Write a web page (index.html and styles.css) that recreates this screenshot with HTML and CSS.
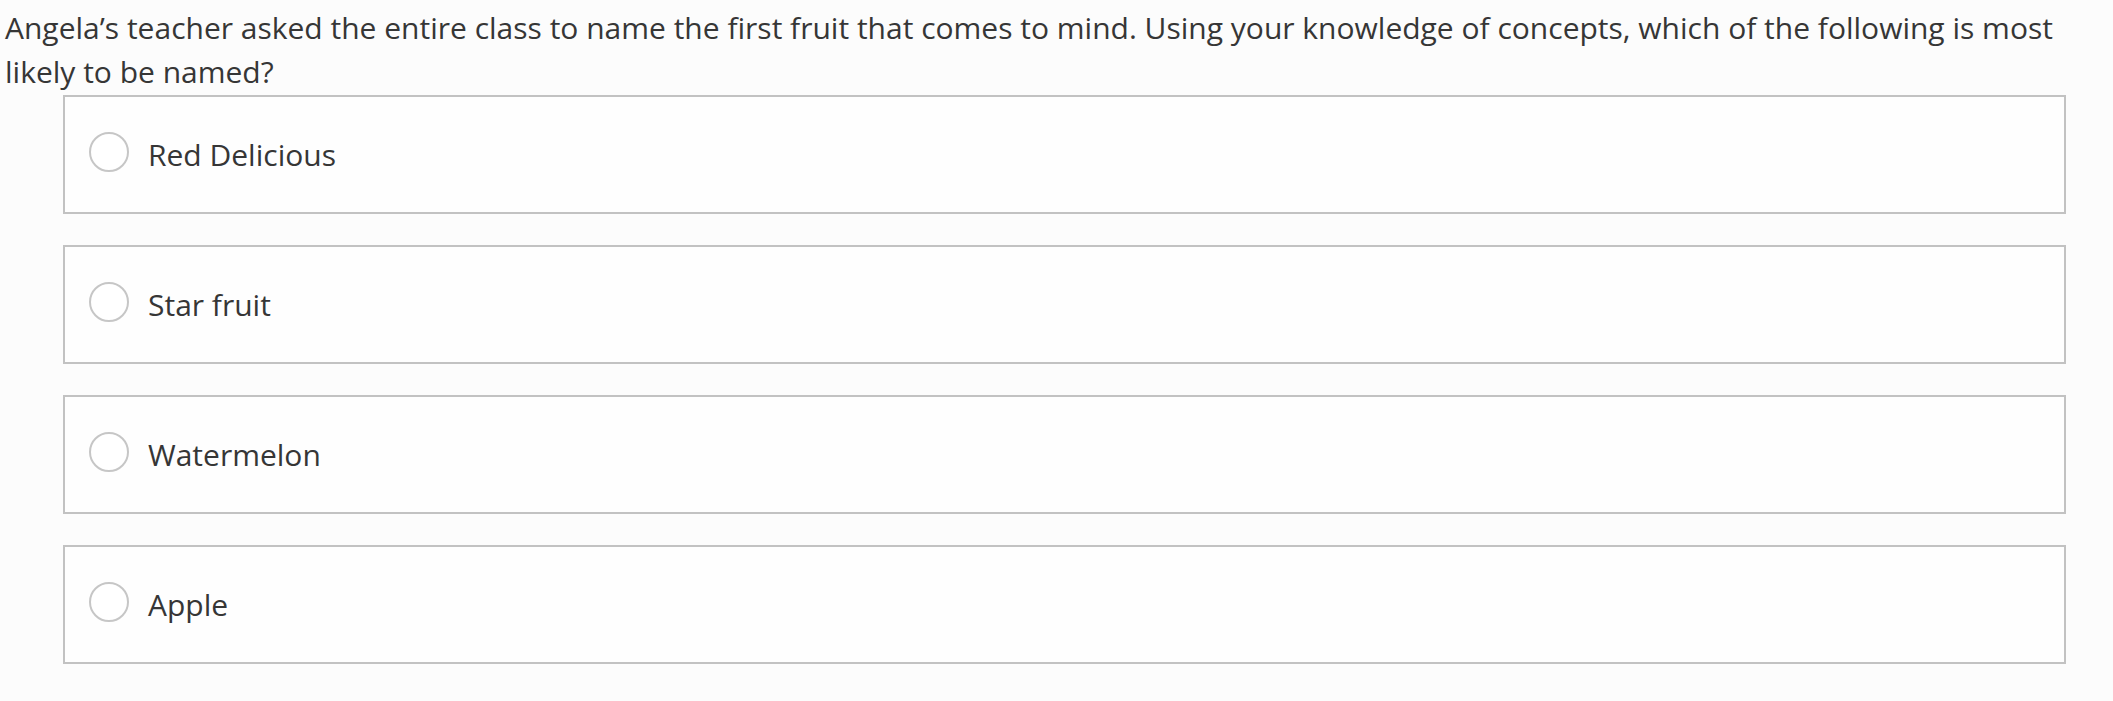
FILE: index.html
```html
<!DOCTYPE html>
<html lang="en">
<head>
<meta charset="utf-8">
<title>Question</title>
<link rel="stylesheet" href="styles.css">
</head>
<body>
<div class="question">
  <p class="prompt">Angela’s teacher asked the entire class to name the first fruit that comes to mind. Using your knowledge of concepts, which of the following is most likely to be named?</p>
  <ul class="options">
    <li class="option"><span class="radio"></span><span class="label">Red Delicious</span></li>
    <li class="option"><span class="radio"></span><span class="label">Star fruit</span></li>
    <li class="option"><span class="radio"></span><span class="label">Watermelon</span></li>
    <li class="option"><span class="radio"></span><span class="label">Apple</span></li>
  </ul>
</div>
</body>
</html>
```
FILE: styles.css
```css
html, body {
  margin: 0;
  padding: 0;
  background: #fcfcfc;
}
body {
  font-family: "Open Sans", "Noto Sans", sans-serif;
  color: #363636;
}
.question {
  width: 2075px;
}
.prompt {
  margin: 0;
  padding: 6px 0 0 5px;
  font-size: 30px;
  line-height: 44px;
}
.options {
  list-style: none;
  margin: 1px 0 0 63px;
  padding: 0;
  width: 2003px;
  display: flex;
  flex-direction: column;
  gap: 31px;
}
.option {
  box-sizing: border-box;
  height: 119px;
  border: 2px solid #c2c2c2;
  background: #fefefe;
  display: flex;
  align-items: center;
  padding-left: 24px;
}
.radio {
  box-sizing: border-box;
  width: 40px;
  height: 40px;
  margin-bottom: 5px;
  border: 2px solid #c6c6c6;
  border-radius: 50%;
  background: #ffffff;
  flex: none;
}
.label {
  margin-left: 19px;
  font-size: 30px;
  line-height: 44px;
}
```
